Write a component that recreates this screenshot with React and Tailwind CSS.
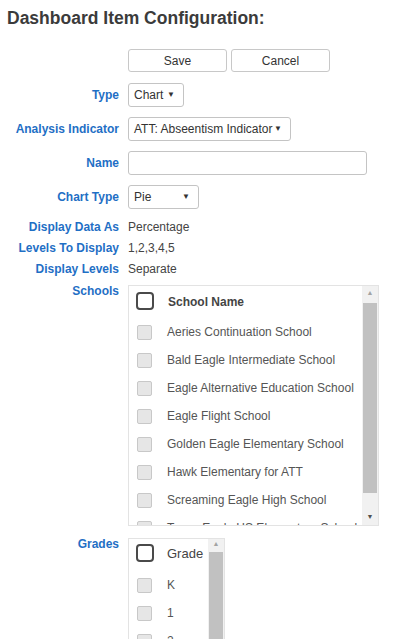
import React from "react"

const schools = [
  "Aeries Continuation School",
  "Bald Eagle Intermediate School",
  "Eagle Alternative Education School",
  "Eagle Flight School",
  "Golden Eagle Elementary School",
  "Hawk Elementary for ATT",
  "Screaming Eagle High School",
  "Tower Eagle HS Elementary School",
]

const grades = ["K", "1", "2", "3"]

function Label({ children, top }) {
  return (
    <div className={`w-[119px] mr-[9px] shrink-0 text-right font-bold text-[12px] text-[#1f6fc5] ${top ? "self-start leading-[13px]" : ""}`}>
      {children}
    </div>
  )
}

function Select({ value, width }) {
  return (
    <div className={`${width} h-[24px] flex items-center justify-between pl-[5px] pr-[8px] border border-[#c4c4c4] rounded-[3px] bg-white text-[12px] text-[#333]`}>
      <span>{value}</span>
      <span className="text-[8px] text-[#333]">▼</span>
    </div>
  )
}

function Scrollbar({ height, thumbTop, thumbBottom }) {
  return (
    <div className="w-[16px] shrink-0 bg-[#f1f1f1] flex flex-col items-center" style={{ height }}>
      <div className="h-[15px] flex items-center text-[7px] text-[#a3a3a3]">▲</div>
      <div className="w-[14px] bg-[#c1c1c1]" style={{ marginTop: thumbTop, height: thumbBottom }} />
      <div className="flex-1" />
      <div className="h-[15px] flex items-center text-[7px] text-[#505050]">▼</div>
    </div>
  )
}

function HeaderBox() {
  return <div className="w-[18px] h-[18px] shrink-0 rounded-[4px] border-2 border-[#4a4a4a] bg-white" />
}

function RowBox() {
  return <div className="w-[15px] h-[15px] shrink-0 ml-[1px] rounded-[2px] border border-[#c8c8c8] bg-[#e6e6e6]" />
}

export default function App() {
  return (
    <div className="w-[397px] h-[639px] overflow-hidden bg-white font-['Liberation_Sans',Arial,sans-serif] pt-[7px]">
      <h1 className="pl-[7px] text-[17.5px] leading-[22px] font-bold text-[#3b3b3b]">Dashboard Item Configuration:</h1>

      <div className="flex mt-[20px] pl-[128px] gap-[4px]">
        <button className="w-[99px] h-[23px] border border-[#c8c8c8] rounded-[3px] bg-white text-[12px] text-[#333]">Save</button>
        <button className="w-[99px] h-[23px] border border-[#c8c8c8] rounded-[3px] bg-white text-[12px] text-[#333]">Cancel</button>
      </div>

      <div className="flex items-center mt-[11px]">
        <Label>Type</Label>
        <Select value="Chart" width="w-[56px]" />
      </div>

      <div className="flex items-center mt-[10px]">
        <Label>Analysis Indicator</Label>
        <Select value="ATT: Abseentism Indicator" width="w-[163px]" />
      </div>

      <div className="flex items-center mt-[10px]">
        <Label>Name</Label>
        <div className="w-[239px] h-[24px] border border-[#c4c4c4] rounded-[3px] bg-white" />
      </div>

      <div className="flex items-center mt-[10px]">
        <Label>Chart Type</Label>
        <Select value="Pie" width="w-[71px]" />
      </div>

      <div className="flex items-center mt-[7px] h-[21px]">
        <Label>Display Data As</Label>
        <span className="text-[12px] text-[#444]">Percentage</span>
      </div>
      <div className="flex items-center h-[21px]">
        <Label>Levels To Display</Label>
        <span className="text-[12px] text-[#444]">1,2,3,4,5</span>
      </div>
      <div className="flex items-center h-[21px]">
        <Label>Display Levels</Label>
        <span className="text-[12px] text-[#444]">Separate</span>
      </div>

      <div className="flex mt-[6px]">
        <Label top>Schools</Label>
        <div className="w-[251px] h-[241px] border border-[#e3e3e3] flex overflow-hidden">
          <div className="flex-1 pl-[7px] overflow-hidden">
            <div className="h-[32px] pt-[6px]">
              <div className="h-[18px] flex items-center gap-[14px]">
                <HeaderBox />
                <span className="text-[12px] font-bold text-[#444] mt-[2px]">School Name</span>
              </div>
            </div>
            {schools.map((s) => (
              <div key={s} className="h-[28px] flex items-center gap-[15px]">
                <RowBox />
                <span className="text-[12px] text-[#555] whitespace-nowrap">{s}</span>
              </div>
            ))}
          </div>
          <Scrollbar height={239} thumbTop={2} thumbBottom={190} />
        </div>
      </div>

      <div className="flex mt-[12px]">
        <Label top>Grades</Label>
        <div className="w-[97px] h-[120px] border border-[#e3e3e3] flex overflow-hidden">
          <div className="flex-1 pl-[7px] overflow-hidden">
            <div className="h-[32px] pt-[5px]">
              <div className="h-[18px] flex items-center gap-[13px]">
                <HeaderBox />
                <span className="text-[13px] text-[#444] mt-[2px]">Grade</span>
              </div>
            </div>
            {grades.map((g) => (
              <div key={g} className="h-[28px] flex items-center gap-[15px]">
                <RowBox />
                <span className="text-[12px] text-[#555]">{g}</span>
              </div>
            ))}
          </div>
          <Scrollbar height={118} thumbTop={2} thumbBottom={200} />
        </div>
      </div>
    </div>
  )
}
